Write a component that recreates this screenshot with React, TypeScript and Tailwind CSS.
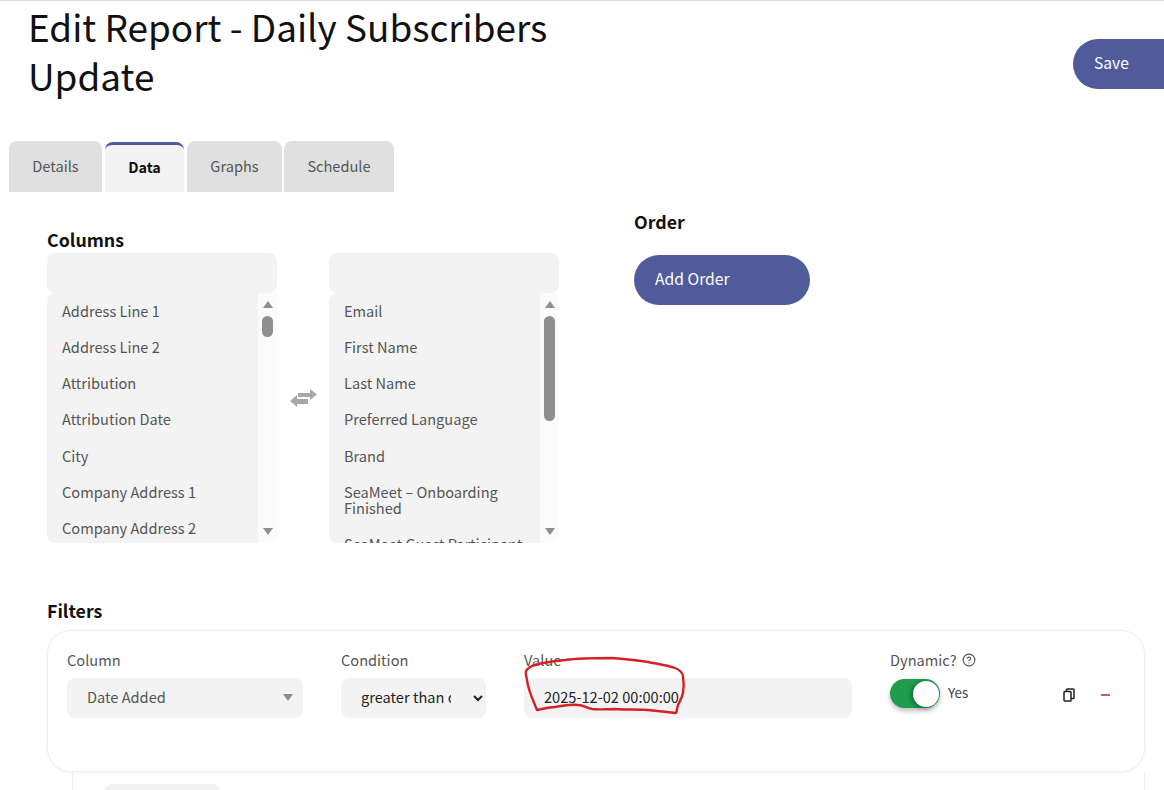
import { CircleHelp } from "lucide-react";

const font = "font-['Noto_Sans_CJK_SC','Liberation_Sans',sans-serif]";

const available = [
  "Address Line 1",
  "Address Line 2",
  "Attribution",
  "Attribution Date",
  "City",
  "Company Address 1",
  "Company Address 2",
];

const selected = [
  "Email",
  "First Name",
  "Last Name",
  "Preferred Language",
  "Brand",
  "SeaMeet – Onboarding Finished",
  "SeaMeet Guest Participant",
];

function Scrollbar({ thumbClass }: { thumbClass: string }) {
  return (
    <div className="flex w-[19px] shrink-0 flex-col items-center bg-[#fbfbfb] pt-[8px]">
      <div className="h-0 w-0 border-x-[5px] border-b-[7px] border-x-transparent border-b-[#8f8f8f]" />
      <div className={`mt-[8px] w-[11px] rounded-full bg-[#8f8f8f] ${thumbClass}`} />
      <div className="mt-auto mb-[8px] h-0 w-0 border-x-[5px] border-t-[7px] border-x-transparent border-t-[#8f8f8f]" />
    </div>
  );
}

function ColumnList({ items, thumbClass }: { items: string[]; thumbClass: string }) {
  return (
    <div className="w-[230px]">
      <div className="h-[40px] rounded-lg bg-[#f3f3f3]" />
      <div className="flex h-[250px] overflow-hidden rounded-b-lg rounded-tl-lg">
        <div className="w-[211px] overflow-hidden bg-[#f3f3f3] pl-[15px] pr-[10px] pt-[9.5px] text-[14.6px] leading-[16px] text-[#555]">
          {items.map((item) => (
            <div key={item} className="pb-[20.3px]">
              {item}
            </div>
          ))}
        </div>
        <Scrollbar thumbClass={thumbClass} />
      </div>
    </div>
  );
}

function Tab({ label, active, className }: { label: string; active?: boolean; className: string }) {
  if (active) {
    return (
      <div
        className={`flex h-[50px] items-center justify-center rounded-t-lg border-t-[3px] border-[#4f5b9b] bg-[#f3f3f3] pb-[4px] text-[14.4px] font-bold text-[#111] ${className}`}
      >
        {label}
      </div>
    );
  }
  return (
    <div
      className={`flex h-[51px] items-center justify-center rounded-t-lg bg-[#e0e0e0] pb-[2px] text-[14.6px] text-[#555] ${className}`}
    >
      {label}
    </div>
  );
}

function SwapIcon() {
  return (
    <svg width="27" height="19" viewBox="0 0 27 19" fill="#a8a8a8">
      <path d="M8 4H20V0L27 5.5L20 11V8H8Z" />
      <path d="M7 6V10H18V15H7V18L0 12Z" />
    </svg>
  );
}

function CopyIcon() {
  return (
    <svg width="12" height="14" viewBox="0 0 12 14" fill="none" stroke="#222" strokeWidth="1.5">
      <rect x="1" y="3.5" width="7" height="9.5" rx="0.8" />
      <path d="M3.5 3.5V1.8C3.5 1.3 3.8 1 4.3 1H10.2C10.7 1 11 1.3 11 1.8V9.7C11 10.2 10.7 10.5 10.2 10.5H8" />
    </svg>
  );
}

export default function App() {
  return (
    <div className={`relative h-[790px] w-[1164px] overflow-hidden bg-white ${font}`}>
      <div className="h-[1px] bg-[#dcdcdc]" />

      <header className="flex items-start justify-between pt-[1px]">
        <h1 className="w-[560px] pl-[28px] text-[36.9px] font-normal leading-[49px] text-[#111]">
          Edit Report - Daily Subscribers Update
        </h1>
        <button className="mt-[37px] flex h-[50px] w-[91px] items-center rounded-l-full bg-[#4f5b9b] pb-[2px] pl-[21px] text-[15.6px] text-white">
          Save
        </button>
      </header>

      <nav className="mt-[41px] flex items-end pl-[9px]">
        <Tab label="Details" className="w-[93px]" />
        <Tab label="Data" active className="ml-[3px] w-[79px]" />
        <Tab label="Graphs" className="ml-[3px] w-[95px]" />
        <Tab label="Schedule" className="ml-[2px] w-[110px]" />
      </nav>

      <section className="flex pl-[47px]">
        <div className="pt-[33px]">
          <h2 className="text-[17.8px] font-bold leading-[28px] text-[#111]">Columns</h2>
          <div className="flex">
            <ColumnList items={available} thumbClass="h-[21px]" />
            <div className="flex w-[52px] items-center justify-center">
              <SwapIcon />
            </div>
            <ColumnList items={selected} thumbClass="h-[105px]" />
          </div>
        </div>
        <div className="ml-[75px] pt-[17px]">
          <h2 className="text-[17.8px] font-bold leading-[24px] text-[#111]">Order</h2>
          <button className="mt-[22px] flex h-[50px] w-[176px] items-center rounded-full bg-[#4f5b9b] pb-[2px] pl-[21px] text-[15.7px] text-white">
            Add Order
          </button>
        </div>
      </section>

      <section className="pl-[47px] pt-[55px]">
        <h2 className="text-[17.8px] font-bold leading-[24px] text-[#111]">Filters</h2>
        <div className="mt-[8px] h-[142px] w-[1098px] rounded-[24px] border border-[#eeeeee] pl-[19px] pt-[19px] shadow-[0_1px_3px_rgba(0,0,0,0.06)]">
          <div className="flex">
            <div className="w-[236px]">
              <div className="text-[14.6px] leading-[20px] text-[#555]">Column</div>
              <div className="mt-[8px] flex h-[40px] items-center justify-between rounded-lg bg-[#f3f3f3] pb-[2px] pl-[20px] pr-[10px] text-[14.6px] text-[#555]">
                Date Added
                <div className="h-0 w-0 border-x-[5px] border-t-[7px] border-x-transparent border-t-[#8f8f8f]" />
              </div>
            </div>
            <div className="ml-[38px] w-[145px]">
              <div className="text-[14.6px] leading-[20px] text-[#555]">Condition</div>
              <select className="mt-[8px] h-[40px] w-full rounded-lg bg-[#f3f3f3] pb-[3px] pl-[16px] pr-[19px] text-[14.6px] text-[#222] outline-none">
                <option>greater than or equal</option>
              </select>
            </div>
            <div className="ml-[38px] w-[328px]">
              <div className="text-[14.6px] leading-[20px] text-[#555]">Value</div>
              <input
                readOnly
                value="2025-12-02 00:00:00"
                className="mt-[8px] h-[40px] w-full rounded-lg bg-[#f3f3f3] pb-[3px] pl-[20px] text-[14.6px] text-[#222] outline-none"
              />
            </div>
            <div className="ml-[38px] w-[172px]">
              <div className="flex items-center gap-[5px] text-[14.6px] leading-[20px] text-[#555]">
                Dynamic?
                <CircleHelp size={14} strokeWidth={2} />
              </div>
              <div className="mt-[9px] flex items-start">
                <div className="flex h-[29px] w-[50px] items-center justify-end rounded-full bg-[#1f9d4d] pr-[1px] shadow-[0_3px_5px_rgba(0,0,0,0.25)]">
                  <div className="h-[26px] w-[26px] rounded-full bg-white shadow-[-2px_1px_4px_rgba(0,0,0,0.35)]" />
                </div>
                <span className="ml-[8px] text-[13.5px] leading-[26px] text-[#444]">Yes</span>
              </div>
            </div>
            <div className="ml-[1px] mt-[38px]">
              <CopyIcon />
            </div>
            <div className="ml-[26px] mt-[44px] h-[1.5px] w-[9px] bg-[#d9506f]" />
          </div>
        </div>
        <div className="ml-[25px] h-[20px] w-[1073px] border-x border-[#eeeeee] pl-[31px] pt-[12px]">
          <div className="h-[20px] w-[116px] rounded-lg bg-[#f3f3f3]" />
        </div>
      </section>

      {/* pen mark drawn over the screenshot */}
      <svg className="absolute left-0 top-0 h-[790px] w-[1164px]" viewBox="0 0 1164 790" fill="none">
        <path
          d="M537 710 C533 700 528 690 527 680 C526 675 525 672 526 671 C528 668 531 666 535 665 C545 662 555 661 565 660 C580 658 596 658 612 658 C625 659 637 660 648 662 C658 664 667 665 675 668 C680 670 683 673 683 677 C684 683 684 688 683 693 C682 698 680 701 678 705 C677 708 677 711 676 713 C667 712 657 711 648 710 C637 709 626 710 615 709 C607 709 599 710 592 709 C587 708 583 705 578 705 C570 704 563 706 555 707 C549 707 543 709 537 710 Z"
          stroke="#d42026"
          strokeWidth="2.4"
          strokeLinejoin="round"
        />
      </svg>
    </div>
  );
}
